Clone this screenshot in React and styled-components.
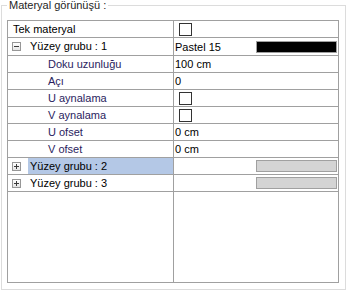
import React from "react";
import styled, { createGlobalStyle } from "styled-components";

const rows = [
  { kind: "plain", name: "Tek materyal", value: { type: "check" } },
  { kind: "group", name: "Yüzey grubu : 1", open: true, tall: true, value: { type: "text", text: "Pastel 15", swatch: "#000" } },
  { kind: "sub", name: "Doku uzunluğu", value: { type: "text", text: "100 cm" } },
  { kind: "sub", name: "Açı", value: { type: "text", text: "0" } },
  { kind: "sub", name: "U aynalama", value: { type: "check" } },
  { kind: "sub", name: "V aynalama", value: { type: "check" } },
  { kind: "sub", name: "U ofset", value: { type: "text", text: "0 cm" } },
  { kind: "sub", name: "V ofset", value: { type: "text", text: "0 cm" } },
  { kind: "group", name: "Yüzey grubu : 2", selected: true, value: { type: "bar" } },
  { kind: "group", name: "Yüzey grubu : 3", value: { type: "bar" } },
];

const Expander = ({ open }) => (
  <ExpandBox>
    <svg width="7" height="7" viewBox="0 0 7 7">
      <rect x="1" y="3" width="5" height="1" fill="#3c3c3c" />
      {!open && <rect x="3" y="1" width="1" height="5" fill="#3c3c3c" />}
    </svg>
  </ExpandBox>
);

const App = () => {
  return (
    <>
      <GlobalStyle />
      <Group>
        <Legend>Materyal görünüşü :</Legend>
        <Grid>
          {rows.map((row) => (
            <Row key={row.name} $tall={row.tall}>
              <NameCell $kind={row.kind}>
                {row.kind === "group" && <Expander open={row.open} />}
                <Name $kind={row.kind} $selected={row.selected}>
                  {row.name}
                </Name>
              </NameCell>
              <ValueCell>
                {row.value.type === "check" && <Check />}
                {row.value.type === "text" && <Value>{row.value.text}</Value>}
                {row.value.swatch && <Swatch $color={row.value.swatch} />}
                {row.value.type === "bar" && <Swatch $color="#d4d4d4" />}
              </ValueCell>
            </Row>
          ))}
          <Filler>
            <NameCell />
            <div />
          </Filler>
        </Grid>
      </Group>
    </>
  );
};

const GlobalStyle = createGlobalStyle`
  html, body {
    margin: 0;
    padding: 0;
    background: #fff;
  }
  body {
    font-family: "Liberation Sans", Arial, sans-serif;
    font-size: 11px;
    color: #000;
  }
`;

const Group = styled.fieldset`
  box-sizing: border-box;
  width: 345px;
  height: 290px;
  margin: 0 0 0 1px;
  padding: 9px 6px 6px 5px;
  border: 1px solid #dcdcdc;
  min-width: 0;
  display: flex;
  flex-direction: column;
`;

const Legend = styled.legend`
  padding: 0 2px;
  margin: 0;
  font-size: 11px;
  line-height: 11px;
  color: #1e1e1e;
`;

const Grid = styled.div`
  flex: 1;
  display: flex;
  flex-direction: column;
  border: 1px solid #a0a0a0;
  background: #fff;
`;

const Row = styled.div`
  box-sizing: border-box;
  display: grid;
  grid-template-columns: 166px 1fr;
  height: ${(p) => (p.$tall ? 18 : 17)}px;
  border-bottom: 1px solid #a0a0a0;
`;

const Filler = styled.div`
  flex: 1;
  display: grid;
  grid-template-columns: 166px 1fr;
`;

const NameCell = styled.div`
  display: flex;
  align-items: center;
  border-right: 1px solid #a0a0a0;
  padding-left: ${(p) => (p.$kind === "group" ? 4 : p.$kind === "sub" ? 38 : 3)}px;
`;

const ExpandBox = styled.span`
  box-sizing: border-box;
  width: 9px;
  height: 9px;
  margin-right: 7px;
  border: 1px solid #979797;
  background: linear-gradient(#ffffff, #e4e4e4);
  display: flex;
  flex-shrink: 0;
`;

const Name = styled.span`
  flex: 1;
  align-self: stretch;
  padding: 0 2px;
  line-height: 16px;
  white-space: nowrap;
  color: ${(p) => (p.$kind === "sub" ? "#2a1d5e" : "#000")};
  background: ${(p) => (p.$selected ? "#b4c8e6" : "transparent")};
`;

const ValueCell = styled.div`
  display: flex;
  align-items: center;
  padding: 0 1px 0 1px;
`;

const Value = styled.span`
  line-height: 16px;
  white-space: nowrap;
`;

const Check = styled.span`
  box-sizing: border-box;
  width: 13px;
  height: 13px;
  margin-left: 4px;
  border: 1px solid #333;
  background: #fff;
`;

const Swatch = styled.span`
  box-sizing: border-box;
  width: 81px;
  height: 12px;
  margin-left: auto;
  border: 1px solid #a0a0a0;
  background: ${(p) => p.$color};
`;

export default App;
